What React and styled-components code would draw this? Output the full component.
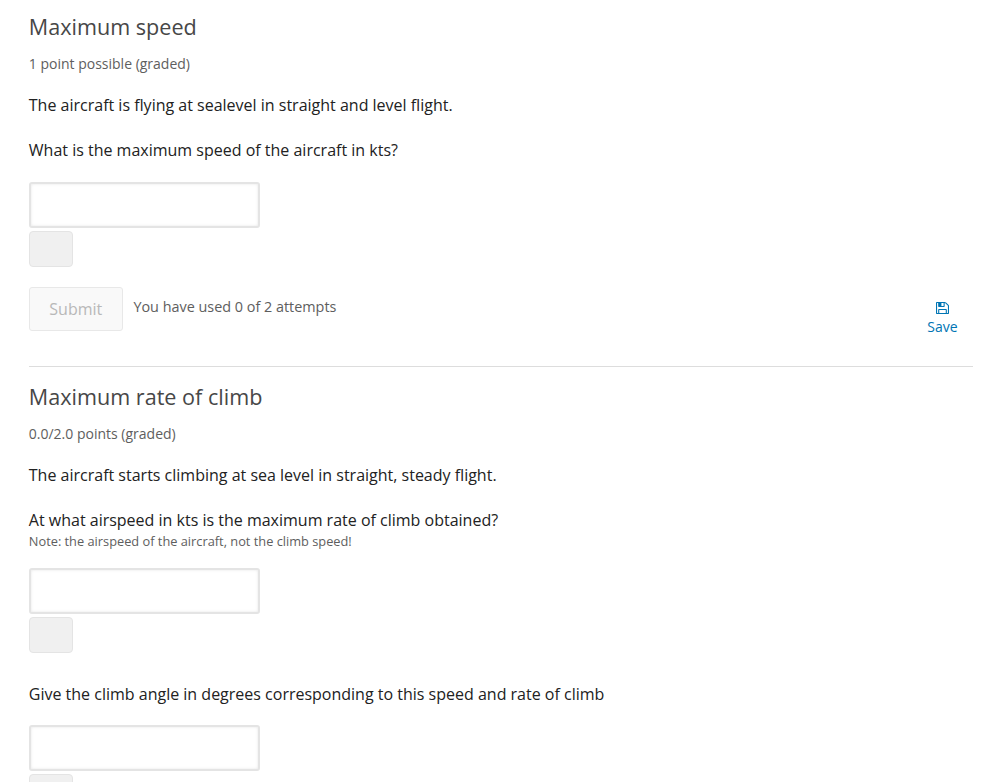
import styled, { createGlobalStyle } from 'styled-components'

const GlobalStyle = createGlobalStyle`
*{
box-sizing:border-box;
}
body{
margin:0;
background:#fff;
overflow:hidden;
font-family:'Open Sans', sans-serif;
}
`

function Answer({label, gap}){
return(
<AnswerBox $gap={gap}>
<Field type='text' aria-label={label} />
<Status />
</AnswerBox>
)
}

function App(){
return(
<>
<GlobalStyle />
<Main>
<Problem>
<Heading>Maximum speed</Heading>
<Progress>1 point possible (graded)</Progress>
<Question>The aircraft is flying at sealevel in straight and level flight.</Question>
<Question>What is the maximum speed of the aircraft in kts?</Question>
<Answer label='Maximum speed in kts' gap={21} />
<Action>
<Submit disabled>Submit</Submit>
<Feedback>You have used 0 of 2 attempts</Feedback>
<Save>
<SaveIcon viewBox='0 128 1536 1536' preserveAspectRatio='none' aria-hidden='true'>
<path d='M384 1536h768v-384h-768v384zM1280 1536h128v-896q0-14-10-38.5t-20-34.5l-281-281q-10-10-34-20t-39-10v416q0 40-28 68t-68 28h-576q-40 0-68-28t-28-68v-416h-128v1280h128v-416q0-40 28-68t68-28h832q40 0 68 28t28 68v416zM896 608v-320q0-13-9.5-22.5t-22.5-9.5h-192q-13 0-22.5 9.5t-9.5 22.5v320q0 13 9.5 22.5t22.5 9.5h192q13 0 22.5-9.5t9.5-22.5zM1536 640v928q0 40-28 68t-68 28h-1344q-40 0-68-28t-28-68v-1344q0-40 28-68t68-28h928q40 0 88 20t76 48l280 280q28 28 48 76t20 88z' />
</SaveIcon>
Save
</Save>
</Action>
</Problem>
<Divider />
<Problem>
<Heading>Maximum rate of climb</Heading>
<Progress>0.0/2.0 points (graded)</Progress>
<Question>The aircraft starts climbing at sea level in straight, steady flight.</Question>
<Question>At what airspeed in kts is the maximum rate of climb obtained?</Question>
<Note>Note: the airspeed of the aircraft, not the climb speed!</Note>
<Answer label='Airspeed in kts' gap={18} />
<Question $top={30}>Give the climb angle in degrees corresponding to this speed and rate of climb</Question>
<Answer label='Climb angle in degrees' gap={20} />
</Problem>
</Main>
</>
)
}
export default App

const Main = styled.main`
height:782px;
overflow:hidden;
padding:11px 27px 0 28.8px;
`
const Problem = styled.section`
display:flex;
flex-direction:column;
`
const Heading = styled.h3`
margin:0;
font-size:21.6px;
line-height:32px;
font-weight:400;
color:#474747;
`
const Progress = styled.div`
margin:11px 0 20px;
font-size:14px;
line-height:20px;
color:#5e5e5e;
`
const Question = styled.p`
margin:${props => props.$top || 0}px 0 0;
font-size:16px;
line-height:22px;
color:#222;
& + &{
margin-top:23px;
}
`
const Note = styled.small`
margin-top:1px;
font-size:12.8px;
line-height:18px;
color:#5e5e5e;
`
const AnswerBox = styled.div`
display:flex;
flex-direction:column;
gap:3px;
margin-top:${props => props.$gap}px;
`
const Field = styled.input`
width:231px;
height:46px;
padding:0 10px;
border:2px solid #e4e4e4;
border-radius:3px;
background:#fff;
box-shadow:inset 0 0 3px 0 #e4e4e4;
font:16px 'Open Sans', sans-serif;
outline:none;
`
const Status = styled.span`
width:44px;
height:36px;
border:1px solid #e4e4e4;
border-radius:4px;
background:#f0f0f0;
`
const Action = styled.div`
display:flex;
align-items:flex-start;
margin-top:20px;
height:59px;
`
const Submit = styled.button`
width:94px;
height:44px;
padding:0;
border:1px solid #e8e8e8;
border-radius:3px;
background:#f9f9f9;
color:#b8b8b8;
font:16px 'Open Sans', sans-serif;
`
const Feedback = styled.div`
margin:10px 0 0 10.6px;
font-size:14.4px;
line-height:20px;
color:#5e5e5e;
`
const Save = styled.button`
display:flex;
flex-direction:column;
align-items:center;
gap:5px;
margin:15px 15.4px 0 auto;
padding:0;
border:0;
background:transparent;
color:#0075b4;
font:14px/16px 'Open Sans', sans-serif;
`
const SaveIcon = styled.svg`
width:13px;
height:12px;
fill:currentColor;
`
const Divider = styled.hr`
width:100%;
height:1px;
margin:20px 0 14px;
border:0;
background:#ddd;
`
